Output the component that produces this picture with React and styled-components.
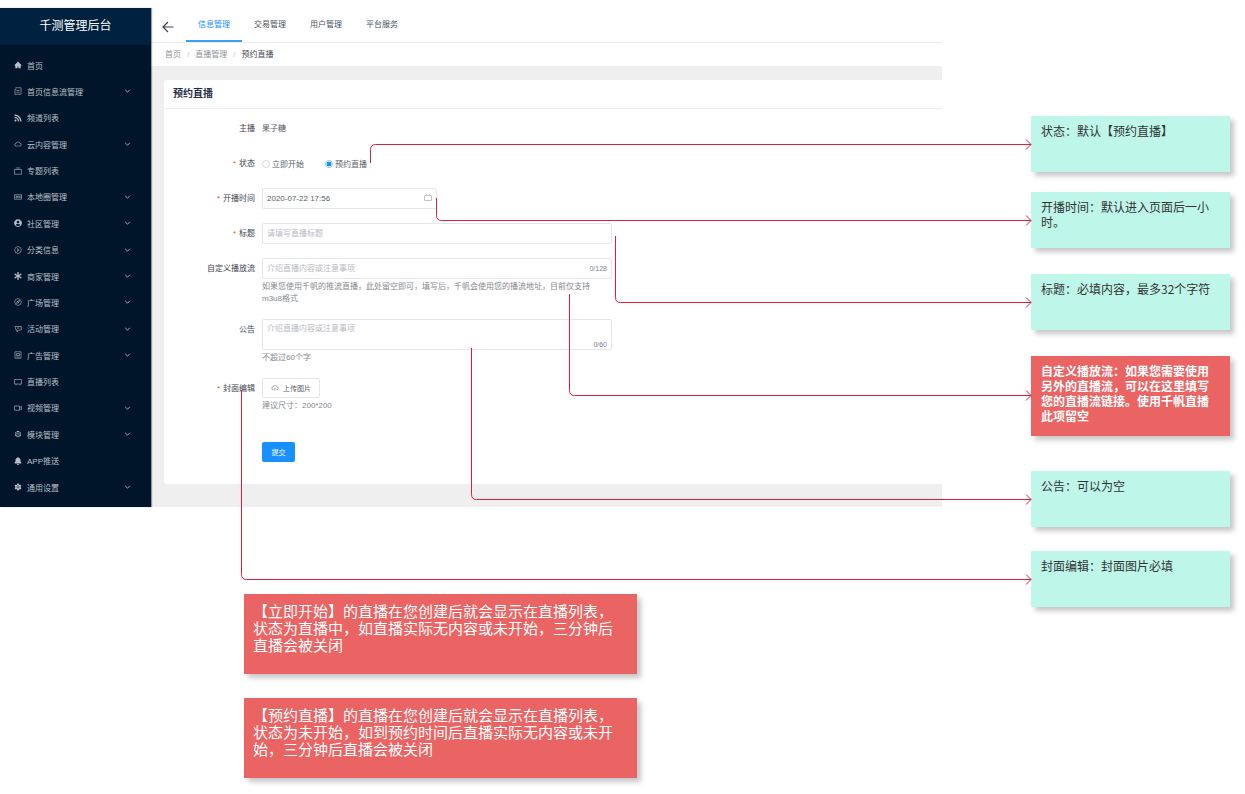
import React, { useState } from "react";
import styled, { createGlobalStyle, css } from "styled-components";
import {
  AiFillHome,
  AiFillSetting,
  AiOutlineCloud,
  AiOutlineCloudUpload,
  AiOutlineCodeSandbox,
  AiOutlineCompass,
  AiOutlinePlayCircle,
} from "react-icons/ai";
import { FaAsterisk, FaBell, FaRss, FaUserCircle } from "react-icons/fa";

const GlobalStyle = createGlobalStyle`
  * {
    box-sizing: border-box;
  }
  body {
    margin: 0;
    background: #fff;
    font-family: "Liberation Sans", "Noto Sans CJK SC", sans-serif;
    font-size: 8px;
    color: #595f69;
  }
  button, input, textarea {
    font: inherit;
    color: inherit;
    margin: 0;
  }
  a {
    color: inherit;
    text-decoration: none;
  }
`;

const Page = styled.div`
  position: relative;
  display: flex;
  gap: 89px;
  padding: 8px 15px 16px 0;
`;

const LeftColumn = styled.div`
  flex: 1;
  min-width: 0;
`;

const AppFrame = styled.div`
  display: flex;
`;

/* ---- sidebar ---- */

const Sidebar = styled.aside`
  flex: none;
  width: 151px;
  display: flex;
  flex-direction: column;
  background: #001529;
  box-shadow: 1px 0 1px rgba(0, 21, 41, 0.4);
  z-index: 1;
`;

const Brand = styled.div`
  height: 37px;
  line-height: 37px;
  text-align: center;
  background: #002140;
  color: #fff;
  font-size: 12px;
`;

const Menu = styled.nav`
  flex: 1;
  display: flex;
  flex-direction: column;
  justify-content: space-between;
  padding: 7px 0 7px;
`;

const itemStyle = css`
  display: flex;
  align-items: center;
  gap: 5px;
  width: 100%;
  height: 26px;
  padding: 0 20px 0 14px;
  border: 0;
  background: none;
  color: #b9c0c7;
  text-align: left;
  cursor: pointer;

  svg {
    flex: none;
    width: 8px;
    height: 8px;
  }
`;

const MenuLink = styled.a`
  ${itemStyle}
`;

const MenuButton = styled.button`
  ${itemStyle}

  svg:last-child {
    width: 7px;
    margin-left: auto;
  }
`;

/* ---- main area ---- */

const Main = styled.main`
  flex: 1;
  min-width: 0;
  display: flex;
  flex-direction: column;
  background: #efefef;
`;

const TopBar = styled.header`
  display: flex;
  align-items: center;
  gap: 12px;
  height: 35px;
  padding-left: 11px;
  background: #fff;
  border-bottom: 1px solid #ececec;
`;

const BackButton = styled.button`
  display: flex;
  padding: 4px 0 0;
  border: 0;
  background: none;
  cursor: pointer;
`;

const Tabs = styled.nav`
  display: flex;
  height: 34px;
`;

const Tab = styled.a`
  padding: 0 12px;
  line-height: 34px;
  color: ${({ $active }) => ($active ? "#1890ff" : "#4d535c")};
  border-bottom: 2px solid ${({ $active }) => ($active ? "#3c9ff5" : "transparent")};
`;

const Breadcrumb = styled.nav`
  display: flex;
  gap: 6px;
  height: 23px;
  padding-left: 14px;
  line-height: 23px;
  background: #fff;
  color: #909399;
`;

const Slash = styled.span`
  color: #c8c8c8;
`;

const Current = styled.span`
  color: #454a52;
`;

const Card = styled.section`
  margin: 14px 0 23px 13px;
  background: #fff;
  border-radius: 3px 0 0 3px;
`;

const CardTitle = styled.h1`
  margin: 0;
  padding-left: 9px;
  height: 29px;
  line-height: 28px;
  border-bottom: 1px solid #ececec;
  font-size: 10px;
  font-weight: 600;
  color: #1f2d47;
`;

/* ---- form ---- */

const Form = styled.form`
  display: flex;
  flex-direction: column;
  gap: 14px;
  padding: 9px 0 22px;
`;

const Row = styled.div`
  display: grid;
  grid-template-columns: 91px minmax(0, 350px);
  column-gap: 7px;
`;

const Label = styled.label`
  line-height: 21px;
  text-align: right;
  color: #41464f;

  ${({ $required }) =>
    $required &&
    css`
      &::before {
        content: "*";
        margin-right: 3px;
        color: #f5482f;
      }
    `}
`;

const Value = styled.output`
  line-height: 21px;
`;

const RadioGroup = styled.div`
  display: flex;
  align-items: center;
  gap: 21px;
  height: 21px;
`;

const RadioLabel = styled.label`
  display: flex;
  align-items: center;
  gap: 2px;
`;

const Radio = styled.input`
  appearance: none;
  width: 8px;
  height: 8px;
  border: 1px solid #d9d9d9;
  border-radius: 50%;

  &:checked {
    border-color: #8cc6fb;
    background: radial-gradient(#1890ff 50%, #fff 62%);
  }
`;

const Field = styled.div`
  position: relative;
  display: flex;
  width: ${({ $short }) => ($short ? "175px" : "100%")};
`;

const fieldStyle = css`
  width: 100%;
  padding: 0 4px;
  border: 1px solid #e6e6e6;
  border-radius: 2px;
  background: #fff;
  outline: none;

  &::placeholder {
    color: #b8babf;
  }
`;

const TextInput = styled.input`
  ${fieldStyle}
  height: 21px;
`;

const TextArea = styled.textarea`
  ${fieldStyle}
  height: 31px;
  padding-top: 3px;
  line-height: 12px;
  resize: none;
`;

const Counter = styled.span`
  position: absolute;
  right: 5px;
  bottom: ${({ $low }) => ($low ? "0" : "5px")};
  line-height: 10px;
  font-size: 7px;
  color: #7b828d;
`;

const DateIcon = styled.svg`
  position: absolute;
  right: 5px;
  top: 6px;
`;

const Help = styled.p`
  margin: 2px 0 0;
  padding-right: 12px;
  line-height: 12px;
  color: #85898f;
`;

const UploadButton = styled.button`
  display: flex;
  align-items: center;
  justify-content: center;
  gap: 4px;
  width: 58px;
  height: 20px;
  padding: 0;
  border: 1px solid #e6e6e6;
  border-radius: 2px;
  background: #fff;
  font-size: 7px;
  cursor: pointer;
`;

const SubmitButton = styled.button`
  grid-column: 2;
  width: 33px;
  height: 20px;
  margin-top: 16px;
  padding: 0;
  border: 0;
  border-radius: 2px;
  background: #1890ff;
  color: #fff;
  font-size: 7px;
  cursor: pointer;
`;

/* ---- annotations ---- */

const Note = styled.div`
  min-height: 56px;
  padding: 7px 10px;
  font-family: "Noto Sans CJK SC", sans-serif;
  font-size: 12px;
  font-weight: ${({ $alert }) => ($alert ? 700 : 400)};
  line-height: 15px;
  background: ${({ $alert }) => ($alert ? "#eb6464" : "#bef6e9")};
  color: ${({ $alert }) => ($alert ? "#fff" : "#333")};
  box-shadow: 4px 4px 5px rgba(0, 0, 0, 0.22);

  ${({ $alert }) => $alert && "min-height: 80px;"}
`;

const NoteColumn = styled.div`
  flex: none;
  width: 199px;
  display: flex;
  flex-direction: column;
  gap: 26px;
  padding-top: 108px;
`;

const NoteGroup = styled.div`
  display: flex;
  flex-direction: column;
  gap: ${({ $gap }) => $gap};
`;

const BottomNotes = styled.div`
  display: flex;
  flex-direction: column;
  gap: 24px;
  margin: 87px 0 0 244px;
`;

const WideNote = styled(Note)`
  max-width: 393px;
  padding: 8px 20px 8px 9px;
  font-size: 15px;
  font-weight: 400;
  line-height: 17px;
`;

const Connectors = styled.svg`
  position: absolute;
  top: 0;
  left: 0;
  z-index: 2;
  pointer-events: none;
`;

/* thin 16x16 line icons for the menu */
function lineIcon(d) {
  return function LineIcon() {
    return (
      <svg viewBox="0 0 16 16" fill="none" stroke="currentColor" strokeWidth="1.2">
        <path d={d} />
      </svg>
    );
  };
}

const FeedIcon = lineIcon("M3 1.5h11v13H2v-10h3M5 7h6M5 10.5h6");
const AlbumIcon = lineIcon("M1 5h14v9.500H1zM3.500 2h9");
const CardsIcon = lineIcon("M1 3.500h14v9H1zM4 6.500h3v3H4zM9.500 6.500h3v3h-3z");
const TrophyIcon = lineIcon("M2 3h12.500v7H9L6 14v-4H4L2 3M6 6h5");
const AdIcon = lineIcon("M2 1.500h12v13H2zM5 5h6v4H5zM4.500 12h7");
const ScreenIcon = lineIcon("M1 3h14v9H1zM4 12v2.500M12 12v2.500");
const CameraIcon = lineIcon("M1 4h10v8.500H1zM11 7l4-2v6.500l-4-2");

function Chevron() {
  return (
    <svg viewBox="0 0 12 12" fill="none" stroke="currentColor" strokeWidth="1.5">
      <path d="M2 4l4 4 4-4" />
    </svg>
  );
}

const menu = [
  { text: "首页", icon: AiFillHome },
  { text: "首页信息流管理", icon: FeedIcon, sub: true },
  { text: "频道列表", icon: FaRss },
  { text: "云内容管理", icon: AiOutlineCloud, sub: true },
  { text: "专题列表", icon: AlbumIcon },
  { text: "本地圈管理", icon: CardsIcon, sub: true },
  { text: "社区管理", icon: FaUserCircle, sub: true },
  { text: "分类信息", icon: AiOutlinePlayCircle, sub: true },
  { text: "商家管理", icon: FaAsterisk, sub: true },
  { text: "广场管理", icon: AiOutlineCompass, sub: true },
  { text: "活动管理", icon: TrophyIcon, sub: true },
  { text: "广告管理", icon: AdIcon, sub: true },
  { text: "直播列表", icon: ScreenIcon },
  { text: "视频管理", icon: CameraIcon, sub: true },
  { text: "模块管理", icon: AiOutlineCodeSandbox, sub: true },
  { text: "APP推送", icon: FaBell },
  { text: "通用设置", icon: AiFillSetting, sub: true },
];

const tabs = ["信息管理", "交易管理", "用户管理", "平台服务"];

// start of each line, then the height at which it reaches its note
const connectors = [
  { x: 370.5, from: 163, to: 144.5 },
  { x: 436.5, from: 198, to: 220.5 },
  { x: 615.5, from: 236, to: 302.5 },
  { x: 569.5, from: 294, to: 395.5 },
  { x: 471.5, from: 348, to: 499.5 },
  { x: 241.5, from: 390, to: 579.5 },
];

function connectorPath({ x, from, to }) {
  const r = to > from ? 5 : -5;
  return `M${x} ${from}V${to - r}Q${x} ${to} ${x + 5} ${to}H1031M1026 ${to - 5}l5 5l-5 5`;
}

export default function App() {
  const [status, setStatus] = useState("reserve");
  const [time, setTime] = useState("2020-07-22 17:56");

  return (
    <>
      <GlobalStyle />
      <Page>
        <LeftColumn>
          <AppFrame>
            <Sidebar>
              <Brand>千测管理后台</Brand>
              <Menu>
                {menu.map(({ text, icon: Icon, sub }) =>
                  sub ? (
                    <MenuButton key={text} type="button">
                      <Icon />
                      {text}
                      <Chevron />
                    </MenuButton>
                  ) : (
                    <MenuLink key={text} href="#">
                      <Icon />
                      {text}
                    </MenuLink>
                  )
                )}
              </Menu>
            </Sidebar>

            <Main>
              <TopBar>
                <BackButton type="button" aria-label="返回">
                  <svg width="12" height="12" viewBox="0 0 12 12" fill="none" stroke="#3d434c" strokeWidth="1.2">
                    <path d="M11.5 6H1M6 1L1 6l5 5" />
                  </svg>
                </BackButton>
                <Tabs>
                  {tabs.map((tab, i) => (
                    <Tab key={tab} href="#" $active={i === 0}>
                      {tab}
                    </Tab>
                  ))}
                </Tabs>
              </TopBar>
              <Breadcrumb>
                <a href="#">首页</a>
                <Slash>/</Slash>
                <a href="#">直播管理</a>
                <Slash>/</Slash>
                <Current>预约直播</Current>
              </Breadcrumb>

              <Card>
                <CardTitle>预约直播</CardTitle>
                <Form onSubmit={(e) => e.preventDefault()}>
                  <Row>
                    <Label htmlFor="anchor">主播</Label>
                    <Value id="anchor">果子糖</Value>
                  </Row>
                  <Row>
                    <Label as="span" id="status" $required>
                      状态
                    </Label>
                    <RadioGroup role="radiogroup" aria-labelledby="status">
                      <RadioLabel>
                        <Radio
                          type="radio"
                          name="status"
                          checked={status === "now"}
                          onChange={() => setStatus("now")}
                        />
                        立即开始
                      </RadioLabel>
                      <RadioLabel>
                        <Radio
                          type="radio"
                          name="status"
                          checked={status === "reserve"}
                          onChange={() => setStatus("reserve")}
                        />
                        预约直播
                      </RadioLabel>
                    </RadioGroup>
                  </Row>
                  <Row>
                    <Label htmlFor="time" $required>
                      开播时间
                    </Label>
                    <Field $short>
                      <TextInput id="time" value={time} onChange={(e) => setTime(e.target.value)} />
                      <DateIcon width="8" height="8" viewBox="0 0 8 8" fill="none" stroke="#c3c6ca">
                        <path d="M0.5 1.5h7v5h-7zM2.500 0v2M5.500 0v2" />
                      </DateIcon>
                    </Field>
                  </Row>
                  <Row>
                    <Label htmlFor="title" $required>
                      标题
                    </Label>
                    <Field>
                      <TextInput id="title" placeholder="请填写直播标题" />
                    </Field>
                  </Row>
                  <Row>
                    <Label htmlFor="stream">自定义播放流</Label>
                    <div>
                      <Field>
                        <TextInput id="stream" placeholder="介绍直播内容或注意事项" />
                        <Counter>0/128</Counter>
                      </Field>
                      <Help>
                        如果您使用千帆的推流直播，此处留空即可，填写后，千帆会使用您的播流地址，目前仅支持m3u8格式
                      </Help>
                    </div>
                  </Row>
                  <Row>
                    <Label htmlFor="notice">公告</Label>
                    <div>
                      <Field>
                        <TextArea id="notice" placeholder="介绍直播内容或注意事项" />
                        <Counter $low>0/60</Counter>
                      </Field>
                      <Help>不超过60个字</Help>
                    </div>
                  </Row>
                  <Row>
                    <Label htmlFor="cover" $required>
                      封面编辑
                    </Label>
                    <div>
                      <UploadButton id="cover" type="button">
                        <AiOutlineCloudUpload size={8} color="#85898f" />
                        上传图片
                      </UploadButton>
                      <Help>建议尺寸：200*200</Help>
                    </div>
                  </Row>
                  <Row>
                    <SubmitButton type="submit">提交</SubmitButton>
                  </Row>
                </Form>
              </Card>
            </Main>
          </AppFrame>

          <BottomNotes>
            <WideNote $alert>
              【立即开始】的直播在您创建后就会显示在直播列表，状态为直播中，如直播实际无内容或未开始，三分钟后直播会被关闭
            </WideNote>
            <WideNote $alert>
              【预约直播】的直播在您创建后就会显示在直播列表，状态为未开始，如到预约时间后直播实际无内容或未开始，三分钟后直播会被关闭
            </WideNote>
          </BottomNotes>
        </LeftColumn>

        <NoteColumn>
          <NoteGroup $gap="20px">
            <Note>状态：默认【预约直播】</Note>
            <Note>开播时间：默认进入页面后一小时。</Note>
          </NoteGroup>
          <Note>标题：必填内容，最多32个字符</Note>
          <NoteGroup $gap="24px">
            <NoteGroup $gap="35px">
              <Note $alert>
                自定义播放流：如果您需要使用另外的直播流，可以在这里填写您的直播流链接。使用千帆直播此项留空
              </Note>
              <Note>公告：可以为空</Note>
            </NoteGroup>
            <Note>封面编辑：封面图片必填</Note>
          </NoteGroup>
        </NoteColumn>

        <Connectors width="1040" height="600" fill="none" stroke="#dc1f3a">
          {connectors.map((c) => (
            <path key={c.x} d={connectorPath(c)} />
          ))}
        </Connectors>
      </Page>
    </>
  );
}
